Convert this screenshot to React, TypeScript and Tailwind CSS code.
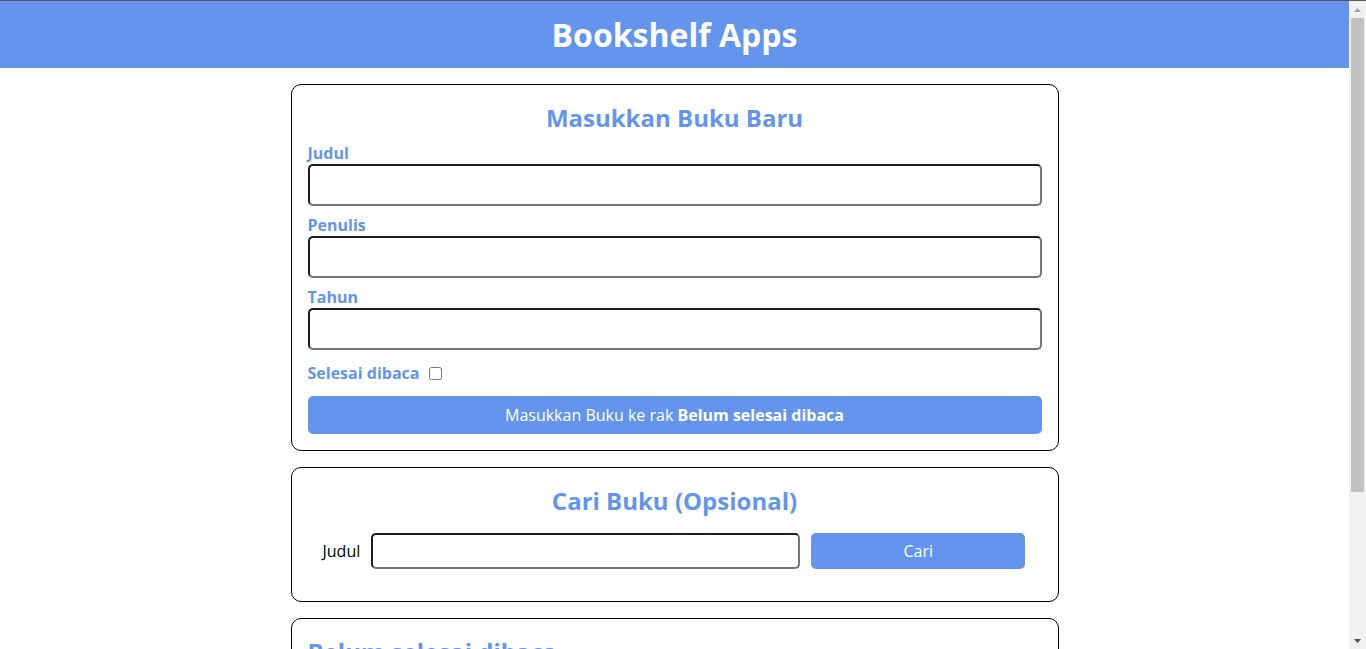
import React from "react";

const inputCls =
  "w-full h-[42px] rounded-[5px] border-2 border-t-[#1e1e1e] border-l-[#1e1e1e] border-b-[#767676] border-r-[#767676] bg-white px-2 outline-none";

function Field({ label }: { label: string }) {
  return (
    <div className="flex flex-col">
      <label className="text-[16px] leading-[22px] font-bold text-[#6495ED]">{label}</label>
      <input className={inputCls} type="text" />
    </div>
  );
}

function BookItem({ title, author, year, done }: { title: string; author: string; year: string; done: boolean }) {
  return (
    <article className="border border-black rounded-[5px] p-4 mt-4">
      <h3 className="text-[20px] font-bold">{title}</h3>
      <p>Penulis: {author}</p>
      <p>Tahun: {year}</p>
      <div className="flex gap-2 mt-2">
        <button className="bg-[#22c55e] text-white rounded-[5px] px-3 py-1">
          {done ? "Belum selesai di Baca" : "Selesai dibaca"}
        </button>
        <button className="bg-[#ef4444] text-white rounded-[5px] px-3 py-1">Hapus buku</button>
      </div>
    </article>
  );
}

function Scrollbar() {
  return (
    <div className="w-[17px] shrink-0 bg-[#f1f1f1] flex flex-col items-center">
      <div className="h-[17px] w-full flex items-center justify-center">
        <svg width="7" height="4" viewBox="0 0 7 4">
          <path d="M3.5 0 L7 4 L0 4 Z" fill="#a3a3a3" />
        </svg>
      </div>
      <div className="w-[13px] h-[474px] bg-[#c1c1c1]" />
      <div className="flex-1" />
      <div className="h-[17px] w-full flex items-center justify-center">
        <svg width="7" height="4" viewBox="0 0 7 4">
          <path d="M0 0 L7 0 L3.5 4 Z" fill="#505050" />
        </svg>
      </div>
    </div>
  );
}

export default function App() {
  return (
    <div
      className="h-screen flex flex-col border-t border-[#5a5a5a] bg-white text-black overflow-hidden"
      style={{ fontFamily: '"Open Sans", "Noto Sans", sans-serif' }}
    >
      <div className="flex-1 flex min-h-0">
        <div className="flex-1 min-w-0 overflow-hidden">
          <header className="h-[67px] bg-[#6495ED] flex items-center justify-center">
            <h1 className="text-[32px] font-bold text-white leading-none">Bookshelf Apps</h1>
          </header>
          <main className="w-[768px] mx-auto pt-4 pb-8 flex flex-col gap-4">
            <section className="border border-black rounded-[10px] p-4">
              <h2 className="text-[24px] leading-[33px] font-bold text-[#6495ED] text-center">Masukkan Buku Baru</h2>
              <form className="flex flex-col mt-2" onSubmit={(e) => e.preventDefault()}>
                <div className="flex flex-col gap-2">
                  <Field label="Judul" />
                  <Field label="Penulis" />
                  <Field label="Tahun" />
                </div>
                <div className="flex items-center mt-3 h-[22px]">
                  <label className="text-[16px] leading-[22px] font-bold text-[#6495ED]">Selesai dibaca</label>
                  <input type="checkbox" className="ml-[10px] w-[13px] h-[13px]" />
                </div>
                <button
                  type="submit"
                  className="mt-3 h-[38px] w-full rounded-[5px] bg-[#6495ED] text-white text-[16px] leading-[22px]"
                >
                  Masukkan Buku ke rak <span className="font-bold">Belum selesai dibaca</span>
                </button>
              </form>
            </section>

            <section className="border border-black rounded-[10px] pt-4 px-4 pb-8">
              <h2 className="text-[24px] leading-[33px] font-bold text-[#6495ED] text-center">Cari Buku (Opsional)</h2>
              <form className="flex items-center mt-4 pl-[15px] gap-[11px]" onSubmit={(e) => e.preventDefault()}>
                <label className="text-[16px] leading-[22px]">Judul</label>
                <input
                  type="text"
                  className="w-[429px] shrink-0 h-[36px] rounded-[5px] border-2 border-t-[#1e1e1e] border-l-[#1e1e1e] border-b-[#767676] border-r-[#767676] bg-white px-2 outline-none"
                />
                <button type="submit" className="w-[214px] shrink-0 h-[36px] rounded-[5px] bg-[#6495ED] text-white text-[16px]">
                  Cari
                </button>
              </form>
            </section>

            <section className="border border-black rounded-[10px] p-4">
              <h2 className="text-[24px] leading-[33px] font-bold text-[#6495ED]">Belum selesai dibaca</h2>
              <BookItem title="Laskar Pelangi" author="Andrea Hirata" year="2005" done={false} />
            </section>

            <section className="border border-black rounded-[10px] p-4">
              <h2 className="text-[24px] leading-[33px] font-bold text-[#6495ED]">Selesai dibaca</h2>
              <BookItem title="Bumi Manusia" author="Pramoedya Ananta Toer" year="1980" done={true} />
            </section>
          </main>
        </div>
        <Scrollbar />
      </div>
    </div>
  );
}
